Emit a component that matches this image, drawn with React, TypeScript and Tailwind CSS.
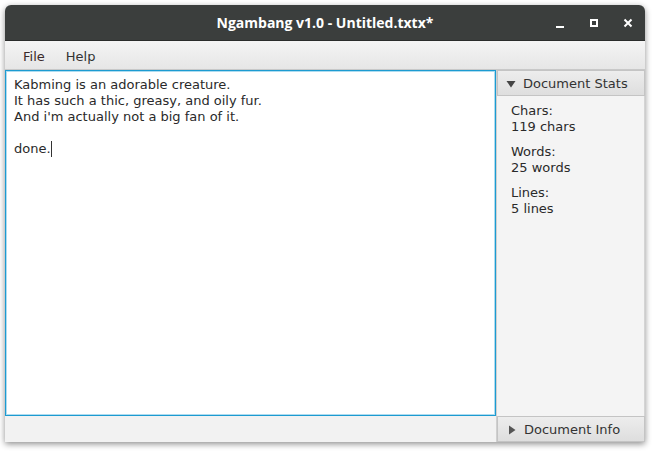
import React from "react";

export default function App() {
  const font = { fontFamily: '"DejaVu Sans", sans-serif' };
  return (
    <div className="w-[654px] h-[451px] bg-white relative" style={font}>
      <div className="absolute left-[5px] top-[5px] w-[640px] h-[437px] flex flex-col rounded-t-[6px] shadow-[0_2px_6px_rgba(0,0,0,0.45)] bg-[#f2f2f2]">
        {/* title bar */}
        <div className="h-[36px] bg-[#3b3e3d] rounded-t-[6px] relative flex items-center justify-center border-b border-[#2a2c2b]">
          <span className="text-white font-bold text-[14px] tracking-[0px]" style={{ fontFamily: '"Open Sans", sans-serif' }}>
            Ngambang v1.0 - Untitled.txtx*
          </span>
          <div className="absolute right-0 top-0 h-full flex items-center">
            <div className="w-[34px] flex justify-center pt-[8px]">
              <div className="w-[8px] h-[2px] bg-white" />
            </div>
            <div className="w-[34px] flex justify-center">
              <div className="w-[8px] h-[8px] border-2 border-white" />
            </div>
            <div className="w-[34px] flex justify-center">
              <svg width="10" height="10" viewBox="0 0 10 10">
                <path d="M1.5 1.5 L8.5 8.5 M8.5 1.5 L1.5 8.5" stroke="white" strokeWidth="2" />
              </svg>
            </div>
          </div>
        </div>
        {/* menu bar */}
        <div className="h-[29px] pt-[4px] bg-gradient-to-b from-[#f4f4f4] to-[#e6e6e6] border-b border-[#c8c8c8] flex items-center text-[13px] text-[#333]">
          <span className="ml-[18px] text-[#3a2a2a]">File</span>
          <span className="ml-[21px]">Help</span>
        </div>
        {/* main */}
        <div className="flex flex-1 min-h-0">
          <div className="w-[491px] flex flex-col">
            <div className="flex-1 border border-[#1c9bd1] shadow-[inset_0_0_0_1px_#aedcf0] bg-white pl-[8px] pt-[6px] text-[13px] leading-[16px] text-[#2a2a2a]">
              <div>Kabming is an adorable creature.</div>
              <div>It has such a thic, greasy, and oily fur.</div>
              <div>And i'm actually not a big fan of it.</div>
              <div>&nbsp;</div>
              <div className="flex items-center">
                done.<span className="inline-block w-[1px] h-[16px] bg-[#333]" />
              </div>
            </div>
            <div className="h-[26px] bg-[#f2f2f2]" />
          </div>
          <div className="flex-1 flex flex-col bg-[#f4f4f4] border-l border-[#d0d0d0]">
            <div className="h-[26px] pt-[2px] bg-gradient-to-b from-[#ededed] to-[#dedede] border border-[#c4c4c4] flex items-center text-[13px] text-[#333]">
              <svg width="10" height="8" viewBox="0 0 10 8" className="ml-[8px] mr-[7px]">
                <path d="M0.5 1 L9.5 1 L5 7.5 Z" fill="#444" />
              </svg>
              Document Stats
            </div>
            <div className="flex-1 pl-[14px] pt-[7px] text-[13px] leading-[16px] text-[#2a2a2a] border-r border-[#d4d4d4]">
              <div>Chars:</div>
              <div>119 chars</div>
              <div className="mt-[9px]">Words:</div>
              <div>25 words</div>
              <div className="mt-[9px]">Lines:</div>
              <div>5 lines</div>
            </div>
            <div className="h-[26px] pt-[2px] bg-gradient-to-b from-[#ededed] to-[#dedede] border border-[#c4c4c4] flex items-center text-[13px] text-[#333]">
              <svg width="8" height="10" viewBox="0 0 8 10" className="ml-[10px] mr-[8px]">
                <path d="M1 0.5 L7.5 5 L1 9.5 Z" fill="#555" />
              </svg>
              Document Info
            </div>
          </div>
        </div>
      </div>
    </div>
  );
}
